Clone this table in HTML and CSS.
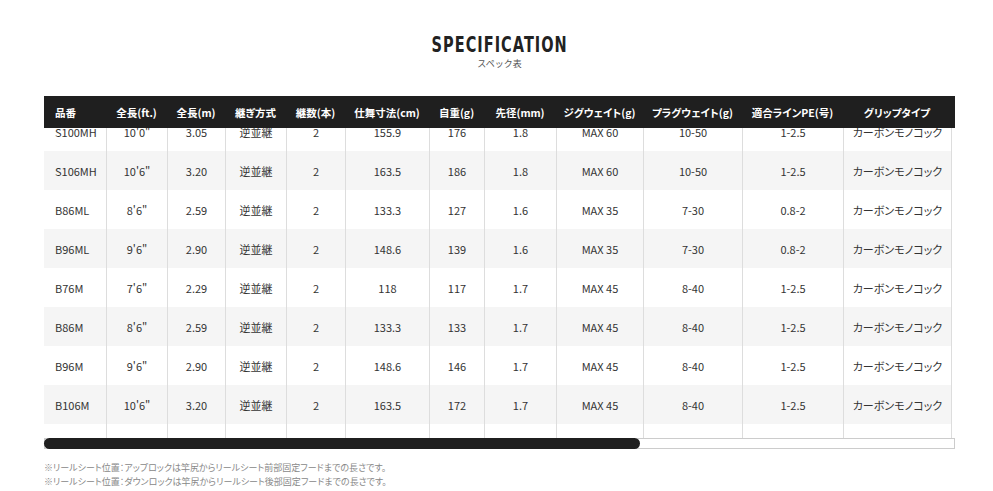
FILE: index.html
```html
<!DOCTYPE html>
<html lang="ja">
<head>
<meta charset="utf-8">
<title>SPECIFICATION</title>
<link rel="stylesheet" href="styles.css">
</head>
<body>
<section class="spec">
  <header class="spec-head">
    <h2 class="spec-title"><span class="spec-title-text">SPECIFICATION</span></h2>
    <p class="spec-sub">スペック表</p>
  </header>

  <div class="scroller">
    <div class="table">
      <div class="row thead">
        <div class="cell first">品番</div>
        <div class="cell">全長(ft.)</div>
        <div class="cell">全長(m)</div>
        <div class="cell">継ぎ方式</div>
        <div class="cell">継数(本)</div>
        <div class="cell">仕舞寸法(cm)</div>
        <div class="cell">自重(g)</div>
        <div class="cell">先径(mm)</div>
        <div class="cell">ジグウェイト(g)</div>
        <div class="cell">プラグウェイト(g)</div>
        <div class="cell">適合ラインPE(号)</div>
        <div class="cell">グリップタイプ</div>
        <div class="cell">本体価格(円)</div>
      </div>
      <div class="body-clip">
        <div class="tbody">
          <div class="row"><div class="cell first">S100MH</div><div class="cell">10'0"</div><div class="cell">3.05</div><div class="cell">逆並継</div><div class="cell">2</div><div class="cell">155.9</div><div class="cell">176</div><div class="cell">1.8</div><div class="cell">MAX 60</div><div class="cell">10-50</div><div class="cell">1-2.5</div><div class="cell">カーボンモノコック</div><div class="cell"></div></div>
          <div class="row alt"><div class="cell first">S106MH</div><div class="cell">10'6"</div><div class="cell">3.20</div><div class="cell">逆並継</div><div class="cell">2</div><div class="cell">163.5</div><div class="cell">186</div><div class="cell">1.8</div><div class="cell">MAX 60</div><div class="cell">10-50</div><div class="cell">1-2.5</div><div class="cell">カーボンモノコック</div><div class="cell"></div></div>
          <div class="row"><div class="cell first">B86ML</div><div class="cell">8'6"</div><div class="cell">2.59</div><div class="cell">逆並継</div><div class="cell">2</div><div class="cell">133.3</div><div class="cell">127</div><div class="cell">1.6</div><div class="cell">MAX 35</div><div class="cell">7-30</div><div class="cell">0.8-2</div><div class="cell">カーボンモノコック</div><div class="cell"></div></div>
          <div class="row alt"><div class="cell first">B96ML</div><div class="cell">9'6"</div><div class="cell">2.90</div><div class="cell">逆並継</div><div class="cell">2</div><div class="cell">148.6</div><div class="cell">139</div><div class="cell">1.6</div><div class="cell">MAX 35</div><div class="cell">7-30</div><div class="cell">0.8-2</div><div class="cell">カーボンモノコック</div><div class="cell"></div></div>
          <div class="row"><div class="cell first">B76M</div><div class="cell">7'6"</div><div class="cell">2.29</div><div class="cell">逆並継</div><div class="cell">2</div><div class="cell">118</div><div class="cell">117</div><div class="cell">1.7</div><div class="cell">MAX 45</div><div class="cell">8-40</div><div class="cell">1-2.5</div><div class="cell">カーボンモノコック</div><div class="cell"></div></div>
          <div class="row alt"><div class="cell first">B86M</div><div class="cell">8'6"</div><div class="cell">2.59</div><div class="cell">逆並継</div><div class="cell">2</div><div class="cell">133.3</div><div class="cell">133</div><div class="cell">1.7</div><div class="cell">MAX 45</div><div class="cell">8-40</div><div class="cell">1-2.5</div><div class="cell">カーボンモノコック</div><div class="cell"></div></div>
          <div class="row"><div class="cell first">B96M</div><div class="cell">9'6"</div><div class="cell">2.90</div><div class="cell">逆並継</div><div class="cell">2</div><div class="cell">148.6</div><div class="cell">146</div><div class="cell">1.7</div><div class="cell">MAX 45</div><div class="cell">8-40</div><div class="cell">1-2.5</div><div class="cell">カーボンモノコック</div><div class="cell"></div></div>
          <div class="row alt"><div class="cell first">B106M</div><div class="cell">10'6"</div><div class="cell">3.20</div><div class="cell">逆並継</div><div class="cell">2</div><div class="cell">163.5</div><div class="cell">172</div><div class="cell">1.7</div><div class="cell">MAX 45</div><div class="cell">8-40</div><div class="cell">1-2.5</div><div class="cell">カーボンモノコック</div><div class="cell"></div></div>
          <div class="row filler"><div class="cell first"></div><div class="cell"></div><div class="cell"></div><div class="cell"></div><div class="cell"></div><div class="cell"></div><div class="cell"></div><div class="cell"></div><div class="cell"></div><div class="cell"></div><div class="cell"></div><div class="cell"></div><div class="cell"></div></div>
        </div>
      </div>
    </div>
  </div>

  <div class="scrollbar"><div class="thumb"></div></div>

  <div class="notes">
    <p>※リールシート位置：アップロックは竿尻からリールシート前部固定フードまでの長さです。</p>
    <p>※リールシート位置：ダウンロックは竿尻からリールシート後部固定フードまでの長さです。</p>
  </div>
</section>
</body>
</html>
```

FILE: styles.css
```css
* { box-sizing: border-box; }
html, body { margin: 0; padding: 0; background: #fff; }
body {
  font-family: "Noto Sans CJK JP", "Noto Sans", sans-serif;
  color: #333;
}
.spec {
  width: 911px;
  margin-left: 44px;
  padding-top: 32px;
}
.spec-head {
  text-align: center;
  height: 64px;
}
.spec-title {
  margin: 0;
  font-family: "DejaVu Sans", sans-serif;
  font-weight: bold;
  font-size: 21px;
  line-height: 26px;
  color: #222;
}
.spec-title-text {
  display: inline-block;
  letter-spacing: 1.5px;
  transform: scaleX(0.69);
}
.spec-sub {
  margin: 0;
  font-size: 9px;
  line-height: 12px;
  color: #555;
}
.scroller {
  width: 911px;
  overflow: hidden;
}
.table {
  width: 1392px;
  font-feature-settings: "palt";
}
.row {
  display: grid;
  grid-template-columns: 62px 61px 58px 61px 59px 84px 55px 72px 87px 99px 101px 108px 485px;
  height: 39px;
  font-size: 11px;
}
.row.alt { background: #f5f5f5; }
.row.alt .cell:last-child { background: #fff; }
.cell {
  display: flex;
  align-items: center;
  justify-content: center;
  border-left: 1px solid #ddd;
  white-space: nowrap;
  color: #333;
}
.cell.first {
  justify-content: flex-start;
  padding-left: 11px;
  border-left: none;
}
.thead {
  position: relative;
  z-index: 1;
  height: 32px;
  background: #1f1f1f;
  font-weight: bold;
  font-size: 10.5px;
}
.thead .cell {
  border-left: none;
  color: #fff;
}
.body-clip {
  height: 310px;
  overflow: hidden;
}
.tbody {
  margin-top: -16px;
}
.row.filler { height: 30px; }
.scrollbar {
  height: 11px;
  border: 1px solid #ccc;
  background: #fff;
  position: relative;
}
.thumb {
  position: absolute;
  left: -1px;
  top: -1px;
  width: 596px;
  height: 11px;
  border-radius: 6px;
  background: #1f1f1f;
}
.notes {
  margin-top: 12px;
  font-size: 9px;
  line-height: 14px;
  color: #888;
  font-feature-settings: "palt";
}
.notes p { margin: 0; white-space: nowrap; }
```
